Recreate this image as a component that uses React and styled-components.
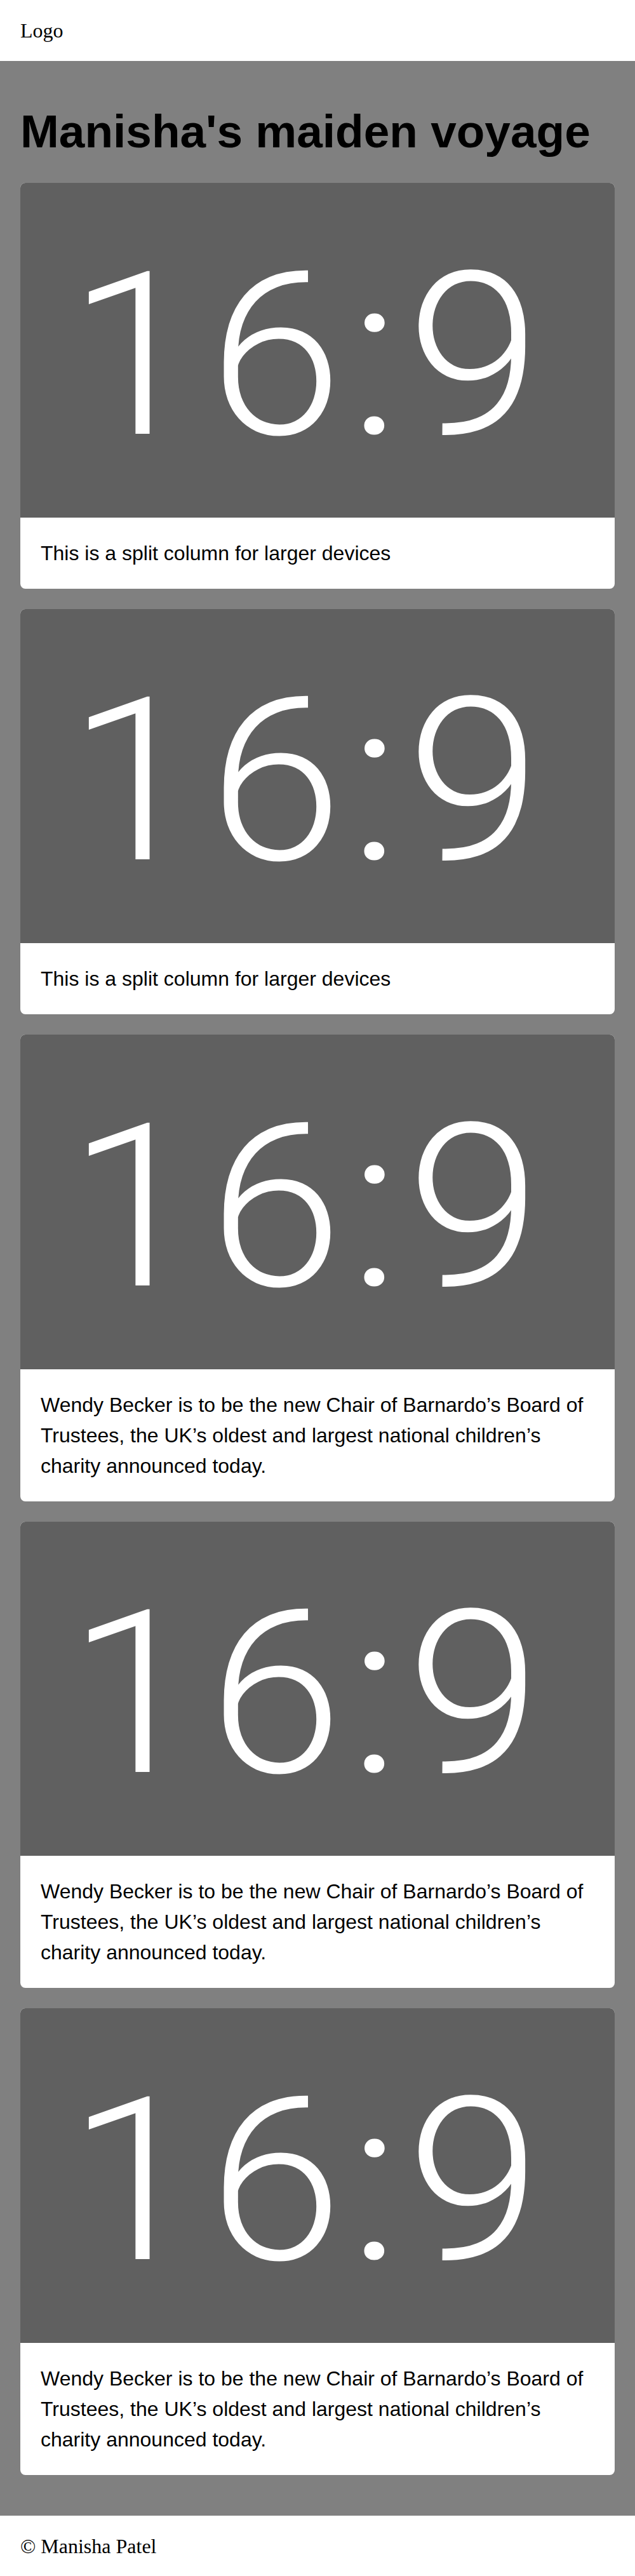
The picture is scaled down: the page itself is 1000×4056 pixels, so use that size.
import React from "react";
import styled, { createGlobalStyle } from "styled-components";

const GlobalStyle = createGlobalStyle`
  *, *::before, *::after { box-sizing: border-box; }
  html, body { margin: 0; padding: 0; }
  body {
    background: #ffffff;
    font-family: "Liberation Serif", "Times New Roman", serif;
    font-size: 32px;
  }
`;

const Page = styled.div`
  display: flex;
  flex-direction: column;
  min-height: 100vh;
`;

const Header = styled.header`
  background: #ffffff;
  padding: 32px;
  font-family: "Liberation Serif", "Times New Roman", serif;
  font-size: 32px;
  line-height: 32px;
  color: #000;
`;

const Main = styled.main`
  background: #808080;
  padding: 32px 32px 64px;
`;

const Title = styled.h1`
  margin: 38px 0 40px;
  font-family: "Liberation Sans", Arial, Helvetica, sans-serif;
  font-weight: 700;
  font-size: 73px;
  line-height: 82px;
  color: #000;
`;

const CardList = styled.div`
  display: flex;
  flex-direction: column;
  gap: 32px;
`;

const Card = styled.article`
  background: #ffffff;
  border-radius: 8px;
  overflow: hidden;
  display: flex;
  flex-direction: column;
`;

const Placeholder = styled.div`
  aspect-ratio: 16 / 9;
  width: 100%;
  background: #606060;
  display: flex;
  align-items: center;
  justify-content: center;
  padding-top: 18px;
  color: #ffffff;
  user-select: none;
`;

const Ratio = styled.span`
  display: block;
  font-family: Roboto, "Noto Sans", sans-serif;
  font-weight: 300;
  font-size: 359px;
  line-height: 1;
  letter-spacing: 10px;
  margin-right: 32px;
  transform: scaleX(1.06);
`;

const Caption = styled.p`
  margin: 0;
  padding: 32px;
  font-family: "Liberation Sans", Arial, Helvetica, sans-serif;
  font-size: 32px;
  line-height: 48px;
  color: #000;
`;

const Footer = styled.footer`
  background: #ffffff;
  padding: 32px;
  font-family: "Liberation Serif", "Times New Roman", serif;
  font-size: 32px;
  line-height: 32px;
  color: #000;
`;

const cards = [
  "This is a split column for larger devices",
  "This is a split column for larger devices",
  "Wendy Becker is to be the new Chair of Barnardo\u2019s Board of Trustees, the UK\u2019s oldest and largest national children\u2019s charity announced today.",
  "Wendy Becker is to be the new Chair of Barnardo\u2019s Board of Trustees, the UK\u2019s oldest and largest national children\u2019s charity announced today.",
  "Wendy Becker is to be the new Chair of Barnardo\u2019s Board of Trustees, the UK\u2019s oldest and largest national children\u2019s charity announced today.",
];

export default function App() {
  return (
    <>
      <GlobalStyle />
      <Page>
        <Header>Logo</Header>
        <Main>
          <Title>Manisha's maiden voyage</Title>
          <CardList>
            {cards.map((text, i) => (
              <Card key={i}>
                <Placeholder>
                  <Ratio>16:9</Ratio>
                </Placeholder>
                <Caption>{text}</Caption>
              </Card>
            ))}
          </CardList>
        </Main>
        <Footer>© Manisha Patel</Footer>
      </Page>
    </>
  );
}
